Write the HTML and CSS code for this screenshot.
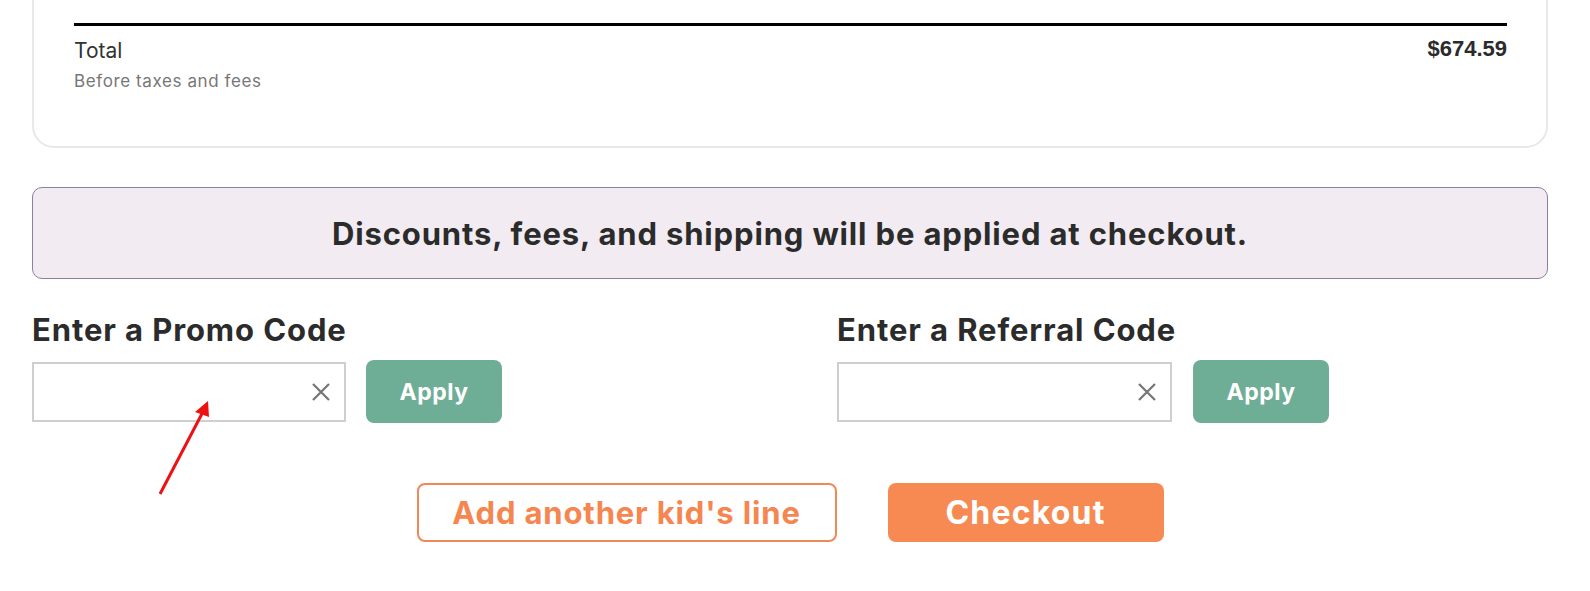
FILE: index.html
```html
<!DOCTYPE html>
<html lang="en">
<head>
    <meta charset="UTF-8">
    <meta name="viewport" content="width=device-width, initial-scale=1.0">
    <title>Cart Summary</title>
    <link rel="stylesheet" href="styles.css">
</head>
<body>

    <div class="page">
        <!-- Order summary card (scrolled, only the bottom shows) -->
        <div class="summary-card">
            <div class="summary-total">
                <div>
                    <div class="total-label">Total</div>
                    <div class="total-note">Before taxes and fees</div>
                </div>
                <div class="total-price">$674.59</div>
            </div>
        </div>

        <div class="notice">Discounts, fees, and shipping will be applied at checkout.</div>

        <!-- Promo / referral codes -->
        <div class="codes">
            <div class="code-group">
                <h2>Enter a Promo Code</h2>
                <div class="code-row">
                    <div class="code-input promo-input">
                        <input type="text" aria-label="Promo code">
                        <button class="clear" aria-label="Clear">
                            <svg width="18" height="18" viewBox="0 0 18 18"><path d="M1 1L17 17M17 1L1 17" stroke="#757575" stroke-width="2.2" fill="none"/></svg>
                        </button>
                    </div>
                    <button class="apply promo-apply">Apply</button>
                </div>
            </div>
            <div class="code-group">
                <h2>Enter a Referral Code</h2>
                <div class="code-row">
                    <div class="code-input referral-input">
                        <input type="text" aria-label="Referral code">
                        <button class="clear" aria-label="Clear">
                            <svg width="18" height="18" viewBox="0 0 18 18"><path d="M1 1L17 17M17 1L1 17" stroke="#757575" stroke-width="2.2" fill="none"/></svg>
                        </button>
                    </div>
                    <button class="apply referral-apply">Apply</button>
                </div>
            </div>
        </div>

        <div class="actions">
            <button class="add-line">Add another kid's line</button>
            <button class="checkout">Checkout</button>
        </div>

        <!-- annotation arrow -->
        <svg class="annotation" width="60" height="100" viewBox="0 0 60 100">
            <path d="M4 96L50 8" stroke="#ee1111" stroke-width="3" fill="none"/>
            <path d="M52 3L39 14L53 19Z" fill="#ee1111"/>
        </svg>
    </div>

</body>
</html>
```

FILE: styles.css
```css
body {
    font-family: Inter, "Noto Sans", sans-serif;
    margin: 0;
    padding: 0;
    background-color: #fff;
    color: #2b2b2b;
    overflow: hidden;
}
.page {
    position: relative;
    padding: 0 42px 0 32px;
}

/* Summary card */
.summary-card {
    margin-top: -40px;
    padding: 63px 39px 0 40px;
    border: 2px solid #e8e8e8;
    border-top: none;
    border-radius: 0 0 22px 22px;
    box-sizing: border-box;
    height: 188px;
}
.summary-total {
    display: flex;
    justify-content: space-between;
    border-top: 3px solid #000;
    padding-top: 11px;
}
.total-label {
    font-size: 21px;
    line-height: 28px;
    color: #333;
}
.total-note {
    font-size: 17px;
    line-height: 24px;
    letter-spacing: 0.6px;
    margin-top: 4px;
    color: #777;
}
.total-price {
    font-family: "Liberation Sans", Arial, sans-serif;
    font-weight: bold;
    font-size: 22px;
    line-height: 24px;
    color: #2b2b2b;
}

/* Notice */
.notice {
    margin-top: 39px;
    height: 92px;
    box-sizing: border-box;
    border: 1px solid #8d7ea2;
    border-radius: 10px;
    background: #f2ebf1;
    display: flex;
    align-items: center;
    justify-content: center;
    font-size: 31px;
    letter-spacing: 0.85px;
    font-weight: 700;
    color: #2b2b2b;
}

/* Codes */
.codes {
    display: grid;
    grid-template-columns: 805px 1fr;
    margin-top: 33px;
}
.code-group h2 {
    margin: 0 0 12px;
    font-size: 31px;
    line-height: 36px;
    letter-spacing: 0.9px;
    font-weight: 700;
    color: #2b2b2b;
}
.code-row {
    display: flex;
    align-items: center;
    gap: 20px;
}
.code-input {
    display: flex;
    align-items: center;
    height: 60px;
    box-sizing: border-box;
    border: 2px solid #cfcfcf;
    background: #fff;
}
.promo-input {
    width: 314px;
}
.referral-input {
    width: 335px;
}
.code-input input {
    flex: 1;
    min-width: 0;
    height: 100%;
    border: none;
    outline: none;
    padding: 0 12px;
    font-family: inherit;
    font-size: 18px;
    background: transparent;
}
.clear {
    background: none;
    border: none;
    padding: 0;
    margin-right: 14px;
    width: 18px;
    height: 18px;
    cursor: pointer;
}
.clear svg {
    display: block;
}
.apply {
    height: 63px;
    background: #6fae96;
    color: #fff;
    border: none;
    border-radius: 8px;
    font-family: inherit;
    font-size: 23px;
    letter-spacing: 0.5px;
    font-weight: 700;
    cursor: pointer;
}
.promo-apply {
    width: 136px;
}
.referral-apply {
    width: 136px;
    margin-left: 1px;
}

/* Bottom actions */
.actions {
    display: flex;
    justify-content: center;
    gap: 51px;
    margin-top: 60px;
}
.actions button {
    height: 59px;
    box-sizing: border-box;
    border-radius: 8px;
    font-family: inherit;
    font-weight: 700;
    cursor: pointer;
}
.add-line {
    width: 420px;
    background: #fff;
    border: 2px solid #f0885a;
    color: #f5864f;
    font-size: 31px;
    letter-spacing: 0.85px;
}
.checkout {
    width: 276px;
    background: #f78a53;
    border: none;
    color: #fff;
    font-size: 32px;
    letter-spacing: 1.2px;
}

/* Annotation */
.annotation {
    position: absolute;
    left: 156px;
    top: 438px;
}
```
